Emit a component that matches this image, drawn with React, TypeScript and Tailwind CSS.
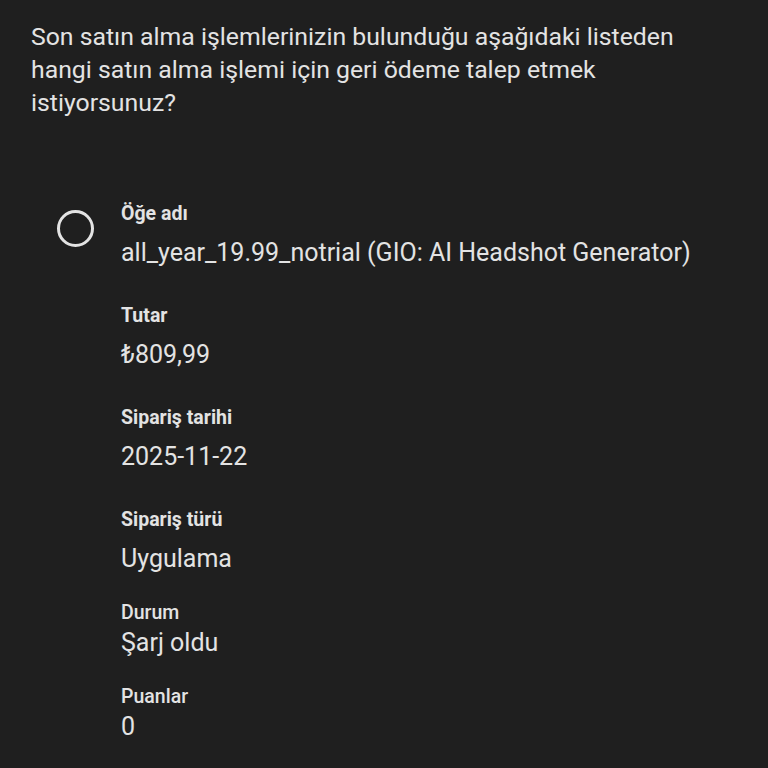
const FIELDS = [
  { label: 'Öğe adı', value: 'all_year_19.99_notrial (GIO: AI Headshot Generator)', tight: false },
  { label: 'Tutar', value: '₺809,99', tight: false },
  { label: 'Sipariş tarihi', value: '2025-11-22', tight: false },
  { label: 'Sipariş türü', value: 'Uygulama', tight: false },
  { label: 'Durum', value: 'Şarj oldu', tight: true },
  { label: 'Puanlar', value: '0', tight: true },
];

export default function App() {
  return (
    <div
      className="w-[768px] h-[768px] overflow-hidden bg-[#1f1f1f] text-[#e3e3e3]"
      style={{ fontFamily: 'Roboto, "Noto Sans", sans-serif' }}
    >
      <p className="pl-[31px] pt-[20px] text-[24.8px] leading-[33px] w-[710px]">
        Son satın alma işlemlerinizin bulunduğu aşağıdaki listeden hangi satın alma işlemi için geri ödeme talep etmek
        istiyorsunuz?
      </p>

      <div className="flex mt-[83px]">
        <div className="w-[121px] shrink-0 pl-[57px] pt-[8px]">
          <div className="w-[37px] h-[37px] rounded-full border-[3px] border-[#e3e3e3]" />
        </div>
        <div className="flex flex-col">
          {FIELDS.map((f, i) => (
            <div key={f.label} className={i === 0 ? '' : f.tight ? 'mt-[27px]' : 'mt-[36px]'}>
              <div className={`text-[19.5px] leading-[24px] ${f.tight ? 'font-medium' : 'font-bold'}`}>{f.label}</div>
              <div className={`text-[25px] leading-[30px] ${f.tight ? 'mt-[3px]' : 'mt-[12px]'}`}>{f.value}</div>
            </div>
          ))}
        </div>
      </div>
    </div>
  );
}
